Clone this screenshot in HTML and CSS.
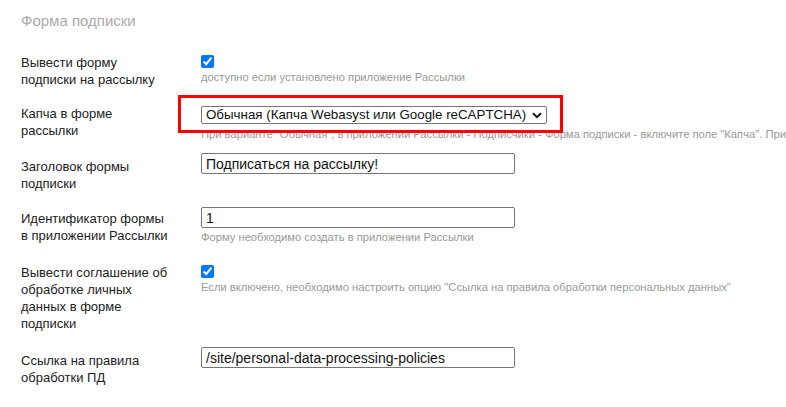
FILE: index.html
```html
<!DOCTYPE html>
<html lang="ru">
<head>
<meta charset="utf-8">
<title>Форма подписки</title>
<link rel="stylesheet" href="styles.css">
</head>
<body>
<div class="page">
  <h2 class="title">Форма подписки</h2>

  <div class="row row-check">
    <div class="label">Вывести форму подписки на рассылку</div>
    <div class="value">
      <input type="checkbox" class="check" checked>
      <div class="hint">доступно если установлено приложение Рассылки</div>
    </div>
  </div>

  <div class="row row-select">
    <div class="label">Капча в форме рассылки</div>
    <div class="value">
      <div class="select-wrap">
        <select class="select">
          <option>Обычная (Капча Webasyst или Google reCAPTCHA)</option>
        </select>
        <svg class="chev" width="10" height="7" viewBox="0 0 10 7"><path d="M1 1.2 L5 5.2 L9 1.2" fill="none" stroke="#111" stroke-width="2"/></svg>
        <div class="highlight"></div>
      </div>
      <div class="hint hint-select">При варианте "Обычная", в приложении Рассылки - Подписчики - Форма подписки - включите поле "Капча". При варианте "Google reCAPTCHA"</div>
    </div>
  </div>

  <div class="row row-input row-title">
    <div class="label">Заголовок формы подписки</div>
    <div class="value">
      <input type="text" class="text" value="Подписаться на рассылку!">
    </div>
  </div>

  <div class="row row-input row-id">
    <div class="label">Идентификатор формы в приложении Рассылки</div>
    <div class="value">
      <input type="text" class="text" value="1">
      <div class="hint">Форму необходимо создать в приложении Рассылки</div>
    </div>
  </div>

  <div class="row row-check row-agree">
    <div class="label">Вывести соглашение об обработке личных данных в форме подписки</div>
    <div class="value">
      <input type="checkbox" class="check" checked>
      <div class="hint">Если включено, необходимо настроить опцию "Ссылка на правила обработки персональных данных"</div>
    </div>
  </div>

  <div class="row row-input row-link">
    <div class="label">Ссылка на правила обработки ПД</div>
    <div class="value">
      <input type="text" class="text" value="/site/personal-data-processing-policies">
    </div>
  </div>
</div>
</body>
</html>
```

FILE: styles.css
```css
html, body {
  margin: 0;
  padding: 0;
  background: #fff;
  overflow: hidden;
}
body {
  font-family: "Liberation Sans", Arial, sans-serif;
  color: #222;
  font-size: 13px;
}
.page {
  padding-left: 21px;
  width: 900px;
}
.title {
  margin: 0;
  padding-top: 11px;
  font-size: 15px;
  line-height: 20px;
  font-weight: normal;
  color: #aaa;
}
.row {
  display: grid;
  grid-template-columns: 180px 1fr;
}
.label {
  padding-right: 28px;
  line-height: 17px;
  font-size: 13px;
  color: #222;
}
.value {
  display: flex;
  flex-direction: column;
  align-items: flex-start;
}
.row-check {
  margin-top: 23px;
}
.check {
  margin: 1px 0 0 0;
  width: 13px;
  height: 13px;
  accent-color: #0075ff;
}
.hint {
  font-size: 11.2px;
  line-height: 13px;
  color: #999;
  white-space: nowrap;
  margin-top: 3px;
}
.row-select {
  margin-top: 17px;
}
.select-wrap {
  position: relative;
  margin-top: 1px;
}
.select {
  appearance: none;
  -webkit-appearance: none;
  width: 346px;
  height: 18px;
  box-sizing: border-box;
  border: 1px solid #767676;
  border-radius: 2px;
  background: #fff;
  font-family: "Liberation Sans", Arial, sans-serif;
  font-size: 13.33px;
  line-height: 16px;
  padding: 0 0 0 4px;
  color: #111;
  display: block;
}
.chev {
  position: absolute;
  right: 5px;
  top: 6px;
  pointer-events: none;
}
.highlight {
  position: absolute;
  left: -23px;
  top: -11px;
  width: 385px;
  height: 38px;
  box-sizing: border-box;
  border: 3px solid #ff0000;
  pointer-events: none;
}
.hint-select {
  margin-top: 4px;
}
.text {
  width: 314px;
  height: 21px;
  box-sizing: border-box;
  border: 1px solid #767676;
  border-radius: 2px;
  padding: 1px 4px;
  font-family: "Liberation Sans", Arial, sans-serif;
  font-size: 14px;
  color: #111;
  margin: 0;
  display: block;
}
.row-input .label {
  padding-top: 5px;
}
.row-title {
  margin-top: 12px;
}
.row-id {
  margin-top: 15px;
}
.row-id .label {
  padding-top: 3px;
}
.row-agree {
  margin-top: 20px;
}
.row-link {
  margin-top: 15px;
}
```
